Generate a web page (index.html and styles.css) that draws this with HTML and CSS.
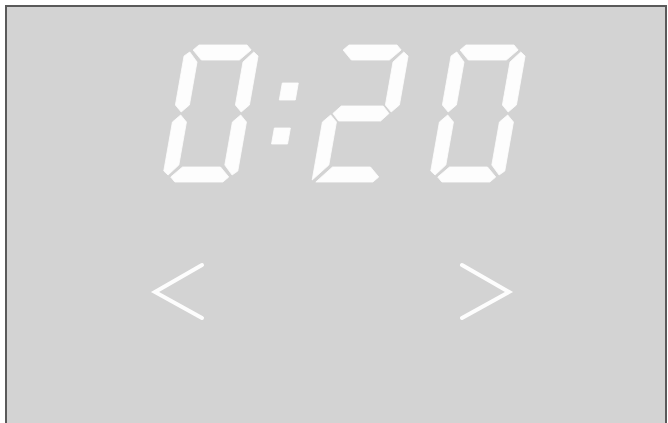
FILE: index.html
```html
<!DOCTYPE html>
<html lang="en">
<head>
<meta charset="utf-8">
<title>Timer</title>
<link rel="stylesheet" href="styles.css">
</head>
<body>
<div class="panel">
  <svg class="display" width="658" height="190" viewBox="7 7 658 190" role="img" aria-label="0:20">
    <title>0:20</title>
    <defs>
      <g id="seg-a"><polygon points="8,5 13,0 61,0 66,5 56,15 18,15"/></g>
      <g id="seg-b"><polygon points="74,11 69,7 60,17 60,60 67,67 74,60"/></g>
      <g id="seg-c"><polygon points="74,77 67,70 60,77 60,120 69,130 74,126"/></g>
      <g id="seg-d"><polygon points="8,132 13,137 61,137 66,132 56,122 18,122"/></g>
      <g id="seg-e"><polygon points="0,77 7,70 14,77 14,120 5,130 0,126"/></g>
      <g id="seg-f"><polygon points="0,11 5,7 14,17 14,60 7,67 0,60"/></g>
      <g id="seg-g"><polygon points="9,68.5 16,61 58,61 65,68.5 58,76 16,76"/></g>
      <g id="digit-0">
        <use href="#seg-a"/><use href="#seg-b"/><use href="#seg-c"/>
        <use href="#seg-d"/><use href="#seg-e"/><use href="#seg-f"/>
      </g>
      <g id="digit-2">
        <use href="#seg-a"/><use href="#seg-b"/><use href="#seg-g"/>
        <polygon points="0,77 7,70 14,77 14,120 0,135"/>
        <polygon points="4,137 61,137 66,132 56,122 18,122"/>
      </g>
    </defs>
    <g class="lit">
      <use href="#digit-0" transform="translate(186 45) skewX(-10)"/>
      <g transform="translate(0 45) skewX(-10)">
        <rect x="289" y="38" width="16" height="17"/>
        <rect x="289" y="83" width="16" height="16"/>
      </g>
      <use href="#digit-2" transform="translate(336 45) skewX(-10)"/>
      <use href="#digit-0" transform="translate(453 45) skewX(-10)"/>
    </g>
  </svg>
  <div class="controls">
    <button class="arrow" type="button" aria-label="Previous">
      <svg width="56" height="60" viewBox="0 0 56 60"><polyline points="52,3 5,30 52,56"/></svg>
    </button>
    <button class="arrow" type="button" aria-label="Next">
      <svg width="56" height="60" viewBox="0 0 56 60"><polyline points="4,3 51,30 4,56"/></svg>
    </button>
  </div>
</div>
</body>
</html>
```
FILE: styles.css
```css
html, body {
  margin: 0;
  padding: 0;
  background: #ffffff;
  font-family: "Liberation Sans", Arial, sans-serif;
}

.panel {
  box-sizing: border-box;
  width: 662px;
  height: 425px;
  margin: 5px 0 0 5px;
  border: 2px solid #5a5a5a;
  border-bottom: 0;
  background: #d3d3d3;
  display: flex;
  flex-direction: column;
}

.display {
  display: block;
}

.lit {
  fill: #fdfdfd;
  stroke: #fdfdfd;
  stroke-width: 0.8;
  stroke-linejoin: round;
}

.controls {
  display: flex;
  gap: 252px;
  margin-top: 65px;
  padding-left: 143px;
}

.arrow {
  display: block;
  width: 56px;
  height: 60px;
  padding: 0;
  margin: 0;
  border: 0;
  background: none;
  cursor: pointer;
}

.arrow svg {
  display: block;
}

.arrow polyline {
  fill: none;
  stroke: #fdfdfd;
  stroke-width: 4;
  stroke-linecap: round;
  stroke-linejoin: miter;
}
```
